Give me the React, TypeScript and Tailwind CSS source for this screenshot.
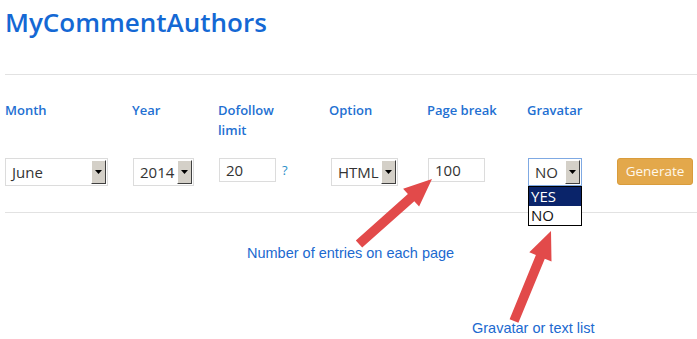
import React from "react";

const OPEN = { fontFamily: '"Open Sans", "Noto Sans", sans-serif' };
const ARIAL = { fontFamily: '"Liberation Sans", Arial, sans-serif' };

function arrowPoints(tx: number, ty: number, px: number, py: number, w: number, h: number, hl: number) {
  const dx = px - tx;
  const dy = py - ty;
  const L = Math.hypot(dx, dy);
  const ux = dx / L;
  const uy = dy / L;
  const nx = -uy;
  const ny = ux;
  const bx = px - ux * hl;
  const by = py - uy * hl;
  const pts = [
    [tx + nx * w, ty + ny * w],
    [bx + nx * w, by + ny * w],
    [bx + nx * h, by + ny * h],
    [px, py],
    [bx - nx * h, by - ny * h],
    [bx - nx * w, by - ny * w],
    [tx - nx * w, ty - ny * w],
  ];
  return pts.map((p) => p.map((v) => v.toFixed(1)).join(",")).join(" ");
}

function ArrowBtn() {
  return (
    <div className="w-[15px] self-stretch my-[1px] mr-[1px] bg-[#d4d0c8] border-t border-l border-t-white border-l-white border-r border-b border-r-[#404040] border-b-[#404040] flex items-center justify-center">
      <svg width="7" height="4" viewBox="0 0 7 4">
        <polygon points="0,0 7,0 3.5,4" fill="#000" />
      </svg>
    </div>
  );
}

function FakeSelect({ value, width, focused }: { value: string; width: string; focused?: boolean }) {
  return (
    <div
      className={`${width} h-[28px] flex items-stretch bg-white border ${focused ? "border-[#7fa9e3]" : "border-[#dcdcdc]"}`}
    >
      <div className="flex-1 flex items-center pl-[6px] text-[15px] text-[#333]" style={OPEN}>
        {value}
      </div>
      <ArrowBtn />
    </div>
  );
}

function FakeInput({ value }: { value: string }) {
  return (
    <div
      className="w-[57px] h-[24px] flex items-center pl-[6px] bg-white border border-[#dcdcdc] text-[15px] text-[#333]"
      style={OPEN}
    >
      {value}
    </div>
  );
}

const cols = "grid grid-cols-[127px_86px_111px_98px_100px_90px_1fr]";

export default function App() {
  const labels = ["Month", "Year", "Dofollow limit", "Option", "Page break", "Gravatar"];
  return (
    <div className="relative w-[697px] h-[339px] bg-white overflow-hidden">
      <div className="pl-[5px]">
        <h1
          className="pt-[4px] h-[40px] leading-[36px] text-[26px] font-semibold text-[#1468d4]"
          style={OPEN}
        >
          MyCommentAuthors
        </h1>
        <div className="mt-[34px] border-t border-[#e2e2e2]" />

        <div className={`${cols} mt-[25px] items-start`}>
          {labels.map((l) => (
            <div
              key={l}
              className={`text-[13px] leading-[20px] font-semibold text-[#2370d2] ${l === "Dofollow limit" ? "w-[70px]" : ""}`}
              style={OPEN}
            >
              {l === "Dofollow limit" ? (
                <>
                  Dofollow
                  <br />
                  limit
                </>
              ) : (
                l
              )}
            </div>
          ))}
          <div />
        </div>

        <div className={`${cols} mt-[18px] items-start h-[28px]`}>
          <div>
            <FakeSelect value="June" width="w-[103px]" />
          </div>
          <div className="pl-[1px]">
            <FakeSelect value="2014" width="w-[61px]" />
          </div>
          <div className="pl-[1px] flex items-center gap-[6px]">
            <FakeInput value="20" />
            <span className="text-[13px] text-[#2a8fc9] mt-[2px]" style={OPEN}>
              ?
            </span>
          </div>
          <div className="pl-[2px]">
            <FakeSelect value="HTML" width="w-[67px]" />
          </div>
          <div className="pl-[1px]">
            <FakeInput value="100" />
          </div>
          <div className="pl-[1px] relative">
            <FakeSelect value="NO" width="w-[54px]" focused />
            <div
              className="absolute left-[1px] top-[28px] w-[54px] border border-black bg-white text-[15px] z-10"
              style={OPEN}
            >
              <div className="h-[19px] leading-[19px] pl-[2px] bg-[#0a246a] text-white">YES</div>
              <div className="h-[19px] leading-[19px] pl-[2px] text-[#111]">NO</div>
            </div>
          </div>
          <div>
            <button
              className="w-[76px] h-[27px] rounded-[3px] bg-[#e3a84b] border border-[#d99c3c] text-[#fff8ec] text-[13.5px] leading-none"
              style={OPEN}
            >
              Generate
            </button>
          </div>
        </div>

        <div className="mt-[26px] border-t border-[#e2e2e2]" />
      </div>

      <div className="text-[14.5px] text-[#2069cf] leading-[16px]" style={ARIAL}>
        <div className="pl-[247px] mt-[32px]">Number of entries on each page</div>
        <div className="pl-[472px] mt-[59px]">Gravatar or text list</div>
      </div>

      <svg className="absolute inset-0 pointer-events-none" width="697" height="339">
        <polygon points={arrowPoints(359, 244, 432, 179, 4.8, 12, 28)} fill="#e24a4a" />
        <polygon points={arrowPoints(514, 321, 551, 231, 4.8, 12, 28)} fill="#e24a4a" />
      </svg>
    </div>
  );
}
